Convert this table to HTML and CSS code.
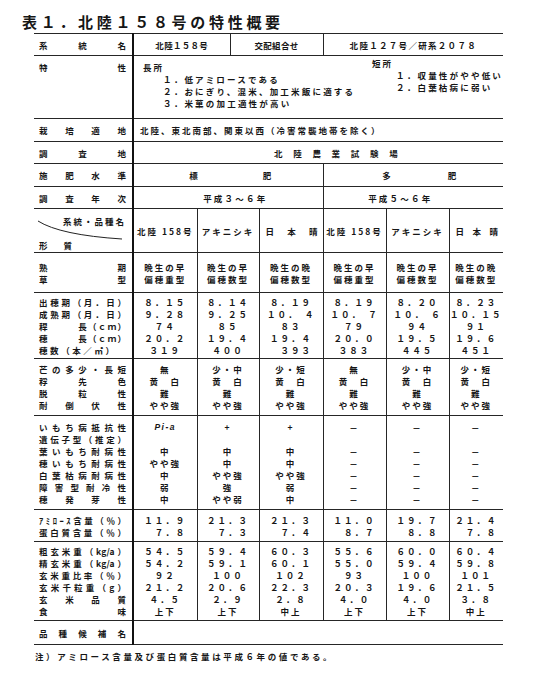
FILE: index.html
```html
<!DOCTYPE html>
<html lang="ja">
<head>
<meta charset="utf-8">
<title>表1．北陸158号の特性概要</title>
<link rel="stylesheet" href="styles.css">
</head>
<body>
<div class="page">
  <h1 class="title">表１．北陸１５８号の特性概要</h1>
  <table class="spec">
    <colgroup>
      <col class="c-label"><col class="c-1"><col class="c-2a"><col class="c-2b"><col class="c-3"><col class="c-4"><col class="c-5"><col class="c-6">
    </colgroup>
    <tbody>
      <tr class="r-name">
        <th class="lab"><div class="j">系統名</div></th>
        <td colspan="2" class="hd1">北陸１５８号</td>
        <td colspan="2" class="hd1">交配組合せ</td>
        <td colspan="3" class="hd1 hd1-wide">北陸１２７号／研系２０７８</td>
      </tr>
      <tr class="r-feat">
        <th class="lab lab-top"><div class="j">特性</div></th>
        <td colspan="7" class="feat">
          <div class="feat-wrap">
            <div class="pros">
              <div class="ln">長所</div>
              <div class="ln item">１．低アミロースである</div>
              <div class="ln item">２．おにぎり、混米、加工米飯に適する</div>
              <div class="ln item">３．米菓の加工適性が高い</div>
            </div>
            <div class="cons">
              <div class="ln">短所</div>
              <div class="ln item">１．収量性がやや低い</div>
              <div class="ln item">２．白葉枯病に弱い</div>
            </div>
          </div>
        </td>
      </tr>
      <tr class="r-area">
        <th class="lab"><div class="j">栽培適地</div></th>
        <td colspan="7" class="left">北陸、東北南部、関東以西（冷害常襲地帯を除く）</td>
      </tr>
      <tr class="r-site">
        <th class="lab"><div class="j">調査地</div></th>
        <td colspan="7" class="site">北陸農業試験場</td>
      </tr>
      <tr class="r-fert">
        <th class="lab"><div class="j">施肥水準</div></th>
        <td colspan="4"><div class="pair pair-a"><span>標</span><span>肥</span></div></td>
        <td colspan="3"><div class="pair pair-b"><span>多</span><span>肥</span></div></td>
      </tr>
      <tr class="r-year">
        <th class="lab"><div class="j">調査年次</div></th>
        <td colspan="4" class="year-a">平成３～６年</td>
        <td colspan="3" class="year-b">平成５～６年</td>
      </tr>
      <tr class="r-head">
        <th class="lab corner">
          <svg class="diag" viewBox="0 0 99 44" preserveAspectRatio="none" aria-hidden="true">
            <path d="M4 12 Q 26 26 88 30" fill="none" stroke="#222" stroke-width="1"/>
          </svg>
          <div class="corner-top">系統・品種名</div>
          <div class="corner-bot"><span>形</span><span>質</span></div>
        </th>
        <td>北陸 158号</td>
        <td colspan="2">アキニシキ</td>
        <td><div class="j nm">日本晴</div></td>
        <td>北陸 158号</td>
        <td>アキニシキ</td>
        <td><div class="j nm">日本晴</div></td>
      </tr>
      <tr class="r-mat">
        <th class="lab"><div class="j">熟期</div><div class="j">草型</div></th>
        <td><div>晩生の早</div><div>偏穂重型</div></td>
        <td colspan="2"><div>晩生の早</div><div>偏穂数型</div></td>
        <td><div>晩生の晩</div><div>偏穂数型</div></td>
        <td><div>晩生の早</div><div>偏穂重型</div></td>
        <td><div>晩生の早</div><div>偏穂数型</div></td>
        <td><div>晩生の晩</div><div>偏穂数型</div></td>
      </tr>
      <tr class="r-grow">
        <th class="lab">
          <div class="j">出穂期（月．日）</div>
          <div class="j">成熟期（月．日）</div>
          <div class="j">稈　　　長（ｃｍ）</div>
          <div class="j">穂　　　長（ｃｍ）</div>
          <div class="j short">穂数（本／㎡）</div>
        </th>
        <td><div>８．１５</div><div>９．２８</div><div>７４</div><div>２０．２</div><div>３１９</div></td>
        <td colspan="2"><div>８．１４</div><div>９．２５</div><div>８５</div><div>１９．４</div><div>４００</div></td>
        <td><div>８．１９</div><div>１０．　４</div><div>８３</div><div>１９．４</div><div>　３９３</div></td>
        <td><div>８．１９</div><div>１０．　７</div><div>７９</div><div>２０．０</div><div>３８３</div></td>
        <td><div>８．２０</div><div>１０．　６</div><div>９４</div><div>１９．５</div><div>４４５</div></td>
        <td><div>８．２３</div><div>１０．１５</div><div>９１</div><div>１９．６</div><div>４５１</div></td>
      </tr>
      <tr class="r-awn">
        <th class="lab">
          <div class="j">芒の多少・長短</div>
          <div class="j">稃先色</div>
          <div class="j">脱粒性</div>
          <div class="j">耐倒伏性</div>
        </th>
        <td><div>無</div><div>黄　白</div><div>難</div><div>やや強</div></td>
        <td colspan="2"><div>少・中</div><div>黄　白</div><div>難</div><div>やや強</div></td>
        <td><div>少・短</div><div>黄　白</div><div>難</div><div>やや強</div></td>
        <td><div>無</div><div>黄　白</div><div>難</div><div>やや強</div></td>
        <td><div>少・中</div><div>黄　白</div><div>難</div><div>やや強</div></td>
        <td><div>少・短</div><div>黄　白</div><div>難</div><div>やや強</div></td>
      </tr>
      <tr class="r-dis">
        <th class="lab">
          <div class="j">いもち病抵抗性</div>
          <div class="j">遺伝子型（推定）</div>
          <div class="j">葉いもち耐病性</div>
          <div class="j">穂いもち耐病性</div>
          <div class="j">白葉枯病耐病性</div>
          <div class="j">障害型耐冷性</div>
          <div class="j">穂発芽性</div>
        </th>
        <td><div class="gene">Pi-a</div><div></div><div>中</div><div>やや強</div><div>中</div><div>弱</div><div>中</div></td>
        <td colspan="2"><div>+</div><div></div><div>中</div><div>中</div><div>やや強</div><div>強</div><div>やや弱</div></td>
        <td><div>+</div><div></div><div>中</div><div>中</div><div>やや強</div><div>弱</div><div>中</div></td>
        <td><div>－</div><div></div><div>－</div><div>－</div><div>－</div><div>－</div><div>－</div></td>
        <td><div>－</div><div></div><div>－</div><div>－</div><div>－</div><div>－</div><div>－</div></td>
        <td><div>－</div><div></div><div>－</div><div>－</div><div>－</div><div>－</div><div>－</div></td>
      </tr>
      <tr class="r-qual">
        <th class="lab">
          <div class="j">ｱﾐﾛｰｽ含量（％）</div>
          <div class="j">蛋白質含量（％）</div>
        </th>
        <td><div>１１．９</div><div>　７．８</div></td>
        <td colspan="2"><div>２１．３</div><div>　７．３</div></td>
        <td><div>２１．３</div><div>　７．４</div></td>
        <td><div>１１．０</div><div>　８．７</div></td>
        <td><div>１９．７</div><div>　８．８</div></td>
        <td><div>２１．４</div><div>　７．８</div></td>
      </tr>
      <tr class="r-yield">
        <th class="lab">
          <div class="j">粗玄米重（kg/a）</div>
          <div class="j">精玄米重（kg/a）</div>
          <div class="j">玄米重比率（％）</div>
          <div class="j">玄米千粒重（g）</div>
          <div class="j">玄米品質</div>
          <div class="j">食味</div>
        </th>
        <td><div>５４．５</div><div>５４．２</div><div>９２</div><div>２１．２</div><div>４．５</div><div>上下</div></td>
        <td colspan="2"><div>５９．４</div><div>５９．１</div><div>１００</div><div>２０．６</div><div>２．９</div><div>上下</div></td>
        <td><div>６０．３</div><div>６０．１</div><div>１０２</div><div>２２．３</div><div>２．８</div><div>中上</div></td>
        <td><div>５５．６</div><div>５５．０</div><div>９３</div><div>２０．３</div><div>４．０</div><div>上下</div></td>
        <td><div>６０．０</div><div>５９．４</div><div>１００</div><div>１９．６</div><div>４．０</div><div>上下</div></td>
        <td><div>６０．４</div><div>５９．８</div><div>１０１</div><div>２１．５</div><div>３．８</div><div>中上</div></td>
      </tr>
      <tr class="r-cand">
        <th class="lab"><div class="j">品種候補名</div></th>
        <td colspan="7"></td>
      </tr>
    </tbody>
  </table>
  <p class="note">注）アミロース含量及び蛋白質含量は平成６年の値である。</p>
</div>
</body>
</html>
```

FILE: styles.css
```css
* { box-sizing: border-box; }

html, body {
  margin: 0;
  background: #ffffff;
}

body {
  font-family: "Noto Sans CJK JP", "Noto Sans CJK SC", sans-serif;
  font-size: 8.5px;
  font-weight: 700;
  color: #161616;
}

.page {
  width: 536px;
  height: 678px;
  padding-top: 12px;
  overflow: hidden;
}

.title {
  margin: 0 0 1px 22px;
  font-size: 15px;
  line-height: 20px;
  letter-spacing: 3.7px;
  font-weight: 700;
}

.spec {
  margin-left: 34px;
  width: 469px;
  border-collapse: collapse;
  table-layout: fixed;
}

.c-label { width: 99px; }
.c-1 { width: 64px; }
.c-2a { width: 33px; }
.c-2b { width: 29px; }
.c-3 { width: 64px; }
.c-4 { width: 63px; }
.c-5 { width: 63px; }
.c-6 { width: 54px; }

.spec th,
.spec td {
  padding: 0;
  border-top: 1px solid #262626;
  border-bottom: 1px solid #262626;
  vertical-align: middle;
  font-weight: 700;
  line-height: 12px;
  letter-spacing: 2px;
  white-space: nowrap;
}

.spec td {
  border-left: 1px solid #262626;
  text-align: center;
}

.spec .lab {
  border-right: 2px solid #111;
  text-align: left;
  padding: 0 6px 0 5px;
}

.spec .j {
  text-align: justify;
  text-align-last: justify;
  letter-spacing: 0;
}

.spec .j.short { padding-right: 12px; }

.spec .lab-top { vertical-align: top; padding-top: 5px; }

/* row heights */
.r-name { height: 22px; }
.r-feat { height: 63px; }
.r-area { height: 23px; }
.r-site { height: 22px; }
.r-fert { height: 23px; }
.r-year { height: 22px; }
.r-head { height: 44px; }
.r-mat { height: 40px; }
.r-grow { height: 66px; }
.r-awn { height: 57px; }
.r-dis { height: 94px; }
.r-qual { height: 32px; }
.r-yield { height: 79px; }
.r-cand { height: 24px; }

.r-dis td div,
.r-dis th div { min-height: 12px; }

.spec .hd1 {
  letter-spacing: 0.3px;
}

.spec .hd1-wide {
  letter-spacing: 1.3px;
}

/* characteristics */
.spec .feat {
  vertical-align: top;
  text-align: left;
}

.feat-wrap {
  display: flex;
}

.pros {
  width: 248px;
  padding: 5px 0 0 9px;
}

.cons {
  padding-top: 1px;
}

.item {
  padding-left: 20px;
  letter-spacing: 2.2px;
}

.cons .item { padding-left: 24px; }

.spec .left {
  text-align: left;
  padding-left: 6px;
  letter-spacing: 2px;
}

.spec .site {
  text-align: left;
  padding-left: 140px;
  letter-spacing: 10.7px;
}

.pair {
  display: flex;
  justify-content: center;
}

.pair-a { gap: 63px; padding-left: 6px; }
.pair-b { gap: 55px; padding-left: 14px; }

.spec .year-a { padding-left: 14px; letter-spacing: 2.2px; }
.spec .year-b { padding-right: 26px; letter-spacing: 2.2px; }

/* corner header */
.spec .corner {
  position: relative;
  vertical-align: top;
  padding-top: 6px;
}

.diag {
  position: absolute;
  left: 0;
  top: 0;
  width: 99px;
  height: 44px;
}

.corner-top {
  text-align: right;
  letter-spacing: 2px;
}

.corner-bot {
  margin-top: 12px;
  display: flex;
  gap: 14px;
}

.spec .nm {
  padding: 0 5px 0 6px;
}

.spec .gene {
  font-family: "Liberation Sans", sans-serif;
  font-style: italic;
  font-size: 8.5px;
  letter-spacing: 1.5px;
}

.note {
  margin: 5px 0 0 35px;
  font-size: 8.5px;
  line-height: 12px;
  letter-spacing: 2.6px;
}
```
